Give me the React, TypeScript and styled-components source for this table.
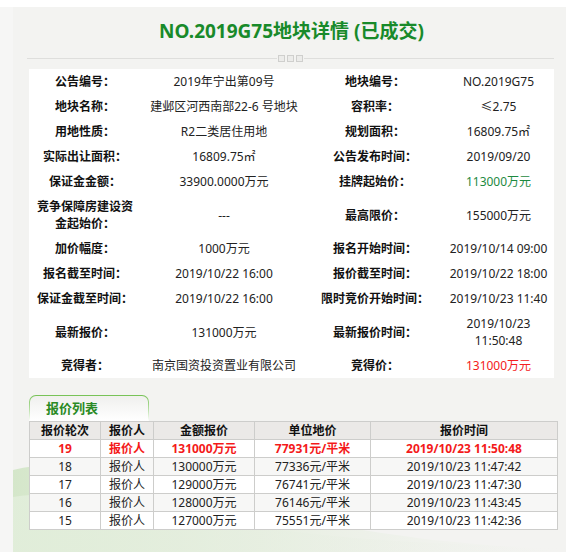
import React from "react";
import styled, { createGlobalStyle } from "styled-components";

const GlobalStyle = createGlobalStyle`
  html, body { margin: 0; padding: 0; background: #ffffff; }
  body { font-family: "Noto Sans", "Noto Sans CJK SC", sans-serif; color: #222; }
  * { box-sizing: border-box; }
`;

const Outer = styled.div`
  margin-top: 7px;
  padding-left: 13px;
  background: #f6f6f5;
  height: 545px;
  overflow: hidden;
`;

const Panel = styled.div`
  position: relative;
  height: 100%;
  background: #f3f3f1;
  padding: 0 12px 0 16px;
  overflow: hidden;
`;

const Wave = styled.svg`
  position: absolute;
  left: 0;
  bottom: 0;
  width: 553px;
  height: 100px;
  z-index: 0;
`;

const Content = styled.div`
  position: relative;
  z-index: 1;
`;

const Title = styled.h1`
  margin: 0;
  padding-top: 12px;
  height: 48px;
  line-height: 24px;
  text-align: center;
  font-size: 19px;
  font-weight: 700;
  color: #188a2a;
`;

const Divider = styled.div`
  position: relative;
  margin-left: -2px;
  height: 7px;
  display: flex;
  align-items: center;
  justify-content: center;
  &::before {
    content: "";
    position: absolute;
    left: 0;
    right: 0;
    top: 3px;
    height: 1px;
    background: #dededc;
  }
`;

const Dots = styled.div`
  position: relative;
  display: flex;
  gap: 2px;
  padding: 0 1px;
  background: #f3f3f1;
`;

const Dot = styled.span`
  width: 7px;
  height: 7px;
  border: 1px solid #cfcfcd;
  background: #ececea;
`;

const InfoBox = styled.div`
  margin-top: 7px;
  background: #ffffff;
  display: grid;
  grid-template-columns: 112px 166px 136px 1fr;
  font-size: 12px;
  line-height: 17px;
`;

const Cell = styled.div<{ $label?: boolean; $tone?: "green" | "red" }>`
  padding: 4px 4px;
  display: flex;
  align-items: center;
  justify-content: center;
  text-align: center;
  font-weight: ${(p) => (p.$label ? 700 : 400)};
  color: ${(p) =>
    p.$tone === "green" ? "#1d8a3f" : p.$tone === "red" ? "#f42020" : p.$label ? "#111" : "#222"};
`;

const Section = styled.div`
  margin-top: 17px;
`;

const TabOuter = styled.div`
  width: 120px;
  height: 26px;
  padding: 1px 1px 0;
  border-radius: 7px 7px 0 0;
  background: linear-gradient(#76c255, #b8dfa6 55%, #ffffff);
`;

const TabInner = styled.div`
  height: 25px;
  border-radius: 6px 6px 0 0;
  background: linear-gradient(#f0f0ee, #ffffff);
  padding-left: 16px;
  line-height: 25px;
  font-size: 13px;
  font-weight: 700;
  color: #2a8a24;
`;

const Table = styled.table`
  border-collapse: collapse;
  width: 528px;
  font-size: 12px;
  table-layout: fixed;
  background: #fff;
`;

const Th = styled.th<{ $w: number }>`
  width: ${(p) => p.$w}px;
  height: 18px;
  padding: 0;
  line-height: 17px;
  border: 1px solid #cdcdcb;
  background: #ebe9e7;
  color: #111;
  font-weight: 700;
  text-align: center;
`;

const Tr = styled.tr<{ $alt?: boolean; $hot?: boolean }>`
  background: ${(p) => (p.$alt ? "#f7f7f6" : "#ffffff")};
  color: ${(p) => (p.$hot ? "#f41a1a" : "#222")};
  font-weight: ${(p) => (p.$hot ? 700 : 400)};
`;

const Td = styled.td`
  height: 18px;
  padding: 0;
  line-height: 17px;
  border: 1px solid #cdcdcb;
  text-align: center;
  white-space: nowrap;
`;

type Info = { l: string; v: string; tone?: "green" | "red" };
const rows: [Info, Info][] = [
  [{ l: "公告编号：", v: "2019年宁出第09号" }, { l: "地块编号：", v: "NO.2019G75" }],
  [{ l: "地块名称：", v: "建邺区河西南部22-6 号地块" }, { l: "容积率：", v: "≤2.75" }],
  [{ l: "用地性质：", v: "R2二类居住用地" }, { l: "规划面积：", v: "16809.75㎡" }],
  [{ l: "实际出让面积：", v: "16809.75㎡" }, { l: "公告发布时间：", v: "2019/09/20" }],
  [{ l: "保证金金额：", v: "33900.0000万元" }, { l: "挂牌起始价：", v: "113000万元", tone: "green" }],
  [{ l: "竞争保障房建设资金起始价：", v: "---" }, { l: "最高限价：", v: "155000万元" }],
  [{ l: "加价幅度：", v: "1000万元" }, { l: "报名开始时间：", v: "2019/10/14 09:00" }],
  [{ l: "报名截至时间：", v: "2019/10/22 16:00" }, { l: "报价截至时间：", v: "2019/10/22 18:00" }],
  [{ l: "保证金截至时间：", v: "2019/10/22 16:00" }, { l: "限时竞价开始时间：", v: "2019/10/23 11:40" }],
  [{ l: "最新报价：", v: "131000万元" }, { l: "最新报价时间：", v: "2019/10/23 11:50:48" }],
  [{ l: "竞得者：", v: "南京国资投资置业有限公司" }, { l: "竞得价：", v: "131000万元", tone: "red" }],
];

const cols = [
  { t: "报价轮次", w: 71 },
  { t: "报价人", w: 53 },
  { t: "金额报价", w: 101 },
  { t: "单位地价", w: 116 },
  { t: "报价时间", w: 187 },
];

const bids = [
  ["19", "报价人", "131000万元", "77931元/平米", "2019/10/23 11:50:48"],
  ["18", "报价人", "130000万元", "77336元/平米", "2019/10/23 11:47:42"],
  ["17", "报价人", "129000万元", "76741元/平米", "2019/10/23 11:47:30"],
  ["16", "报价人", "128000万元", "76146元/平米", "2019/10/23 11:43:45"],
  ["15", "报价人", "127000万元", "75551元/平米", "2019/10/23 11:42:36"],
];

export default function App() {
  return (
    <>
      <GlobalStyle />
      <Outer>
        <Panel>
          <Wave viewBox="0 0 553 100" preserveAspectRatio="none">
            <defs>
              <linearGradient id="wg" x1="0" y1="0" x2="1" y2="0">
                <stop offset="0" stopColor="#d3e6c8" stopOpacity="0.95" />
                <stop offset="0.45" stopColor="#dfecd6" stopOpacity="0.6" />
                <stop offset="1" stopColor="#eef2ea" stopOpacity="0" />
              </linearGradient>
              <linearGradient id="wg2" x1="0" y1="0" x2="1" y2="0">
                <stop offset="0" stopColor="#e2eedb" stopOpacity="0.9" />
                <stop offset="0.6" stopColor="#e8efe3" stopOpacity="0.4" />
                <stop offset="1" stopColor="#f0f2ed" stopOpacity="0" />
              </linearGradient>
            </defs>
            <path d="M0 18 C 40 8, 90 14, 140 30 C 200 50, 280 70, 420 88 L 553 100 L 0 100 Z" fill="url(#wg)" />
            <path d="M0 45 C 60 35, 140 55, 230 72 C 320 88, 430 92, 553 96 L 553 100 L 0 100 Z" fill="url(#wg2)" />
          </Wave>
          <Content>
            <Title>NO.2019G75地块详情 (已成交)</Title>
            <Divider>
              <Dots>
                <Dot />
                <Dot />
                <Dot />
              </Dots>
            </Divider>
            <InfoBox>
              {rows.map(([a, b], i) => (
                <React.Fragment key={i}>
                  <Cell $label>{a.l}</Cell>
                  <Cell $tone={a.tone}>{a.v}</Cell>
                  <Cell $label>{b.l}</Cell>
                  <Cell $tone={b.tone}>{b.v}</Cell>
                </React.Fragment>
              ))}
            </InfoBox>
            <Section>
              <TabOuter>
                <TabInner>报价列表</TabInner>
              </TabOuter>
              <Table>
                <thead>
                  <tr>
                    {cols.map((c) => (
                      <Th key={c.t} $w={c.w}>
                        {c.t}
                      </Th>
                    ))}
                  </tr>
                </thead>
                <tbody>
                  {bids.map((r, i) => (
                    <Tr key={r[0]} $hot={i === 0} $alt={i % 2 === 1}>
                      {r.map((c, j) => (
                        <Td key={j}>{c}</Td>
                      ))}
                    </Tr>
                  ))}
                </tbody>
              </Table>
            </Section>
          </Content>
        </Panel>
      </Outer>
    </>
  );
}
